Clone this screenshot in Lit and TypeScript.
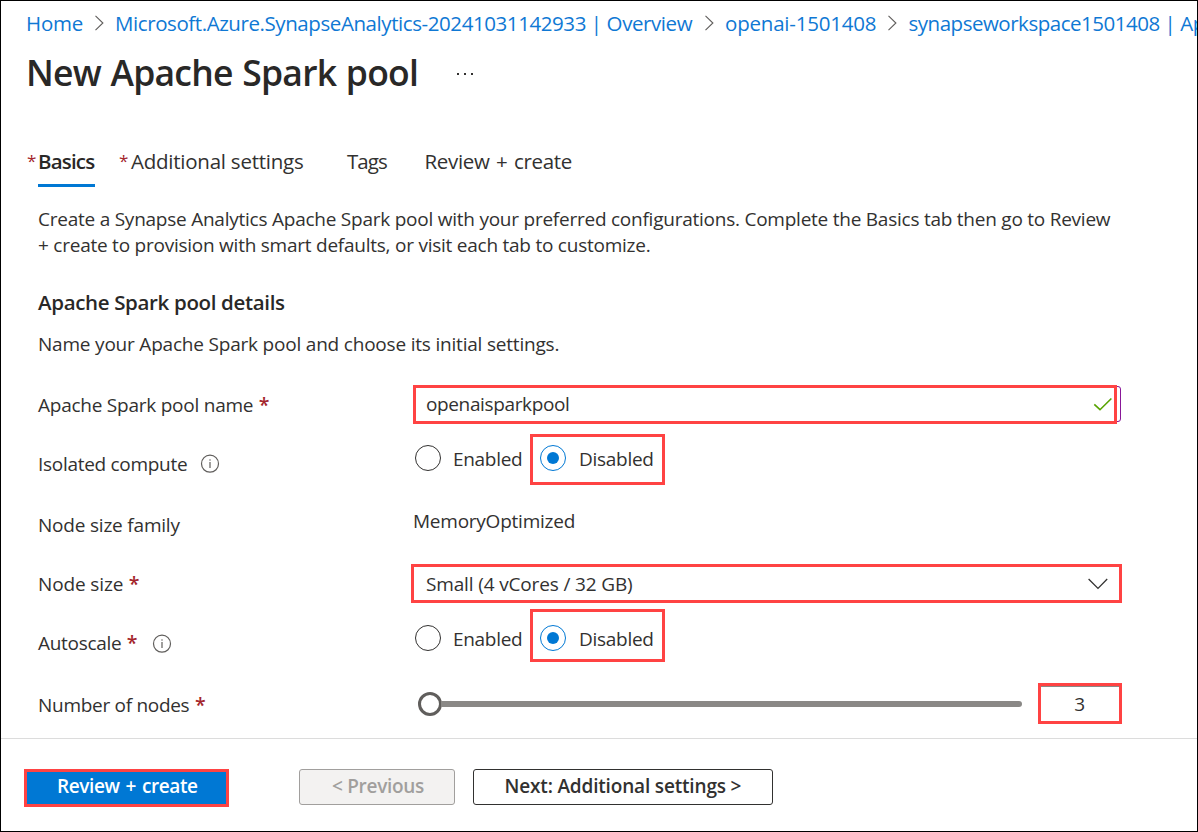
import { LitElement, html, css, nothing } from "lit";
import { customElement, property } from "lit/decorators.js";

const chevronRight = html`<svg class="sep" width="10" height="16" viewBox="0 0 10 16" fill="none" stroke="#605e5c" stroke-width="1.1"><path d="M.5.9 7.9 8 .5 15.1" /></svg>`;
const infoIcon = html`<svg class="info" width="20" height="20" viewBox="0 0 20 20" fill="none" stroke="#605e5c"><circle cx="10" cy="9.7" r="8.5" stroke-width="1.2" /><path d="M10 8V14" stroke-width="1.2" /><circle cx="10" cy="6" r=".75" fill="#605e5c" stroke="none" /></svg>`;
const checkIcon = html`<svg class="check" width="20" height="15" viewBox="0 0 20 15" fill="none" stroke="#57a300" stroke-width="1.6"><path d="M1.3 7.3 7 12.7 18.4 1.5" /></svg>`;
const chevronDown = html`<svg class="caret" width="22" height="13" viewBox="0 0 22 13" fill="none" stroke="#323130" stroke-width="1.3"><path d="M1.6 2 11 11.4 20.2 2" /></svg>`;

@customElement("radio-pair")
class RadioPair extends LitElement {
  @property({ type: Boolean }) tall = false;
  static styles = css`
    :host { display: block; }
    .pair { display: flex; align-items: flex-start; height: 51px; }
    .pair.tall { height: 53px; }
    .option { display: flex; box-sizing: border-box; height: 100%; line-height: 26px; padding-top: 11px; }
    .tall .option { padding-top: 16px; }
    .off { width: 119px; padding-left: 4px; }
    .on { width: 135px; border: 3px solid #ff4343; padding: 8px 0 0 7px; }
    .tall .on { padding-top: 13px; }
    .ring { box-sizing: border-box; width: 26px; height: 26px; border: 1.3px solid #323130; border-radius: 50%; flex: none; display: grid; place-items: center; }
    .on .ring { border-color: #0078d4; }
    .on .ring::after { content: ""; width: 12px; height: 12px; border-radius: 50%; background: #0078d4; }
    .text { padding: 1px 0 0 12px; letter-spacing: -0.3px; }
    .on .text { padding-left: 13px; letter-spacing: -0.28px; }
  `;
  render() {
    return html`<div class="pair ${this.tall ? "tall" : ""}">
      <label class="option off"><span class="ring"></span><span class="text">Enabled</span></label>
      <label class="option on"><span class="ring"></span><span class="text">Disabled</span></label>
    </div>`;
  }
}

@customElement("app-root")
class AppRoot extends LitElement {
  static styles = css`
    :host { display: block; font: 19px/26px "Open Sans", "Noto Sans", sans-serif; color: #323130; letter-spacing: -0.24px; }
    .page { box-sizing: border-box; width: 1198px; height: 832px; border: 1px solid #000; background: #fff; overflow: hidden; display: flex; flex-direction: column; white-space: nowrap; }
    .crumbs { display: flex; align-items: center; padding: 8px 0 0 25px; height: 28px; overflow: hidden; font-size: 20.5px; line-height: 28px; color: #0f78d4; }
    .crumbs span { flex: none; }
    .sep { flex: none; margin-right: 10.5px; }
    .c1 { width: 68.5px; letter-spacing: -0.2px; }
    .c2 { width: 589.5px; letter-spacing: -0.42px; }
    .c3 { width: 163px; letter-spacing: -0.2px; }
    .c4 { letter-spacing: -0.48px; }
    .head { display: flex; align-items: center; margin-top: 11px; height: 48px; padding-left: 25px; }
    h1 { margin: 0; font-size: 35.5px; line-height: 48px; font-weight: 600; letter-spacing: -0.75px; word-spacing: 1px; width: 431px; color: #292827; }
    .dots { display: flex; gap: 5px; margin-top: 4px; }
    .dots i { width: 2px; height: 2px; background: #323130; }
    .tabs { display: flex; margin-top: 51px; padding-left: 26px; height: 40px; font-size: 20.5px; line-height: 28px; }
    .star { color: #a4262c; }
    .tabs .star { width: 11px; font-size: 17px; line-height: 27px; flex: none; letter-spacing: 0; }
    .tab { box-sizing: border-box; height: 40px; }
    .basics { width: 57px; border-bottom: 3px solid #0078d4; font-weight: 600; letter-spacing: -0.83px; margin-right: 24px; color: #292827; }
    .additional { width: 216px; letter-spacing: -0.24px; padding-left: 1px; box-sizing: border-box; }
    .tags { width: 78.5px; letter-spacing: -0.95px; padding-left: 1px; }
    .review { letter-spacing: -0.32px; word-spacing: 1.5px; }
    .body { padding-left: 37px; }
    p { margin: 0; }
    .intro { margin-top: 19px; }
    h2 { margin: 30px 0 0; font-size: 20.5px; line-height: 28px; font-weight: 600; letter-spacing: -0.34px; color: #292827; }
    .sub { margin-top: 15px; letter-spacing: -0.2px; }
    .row { display: flex; align-items: flex-start; }
    .label { width: 373px; flex: none; display: flex; align-items: center; }
    .label .star { font-weight: 600; font-size: 19.5px; margin-left: 5.5px; letter-spacing: 0; }
    .info { margin-left: 13px; }
    .name { margin-top: 28px; height: 39px; }
    .name .label { padding-top: 7px; }
    .isolated { margin-top: 10px; }
    .isolated .label { padding-top: 17px; letter-spacing: -0.29px; }
    .family { margin-top: 23px; height: 26px; }
    .family .label { padding-top: 4px; letter-spacing: -0.2px; }
    .size { margin-top: 30px; }
    .size .label { padding-top: 7px; letter-spacing: -0.12px; }
    .autoscale { margin-top: 6px; }
    .autoscale .label { padding-top: 21px; letter-spacing: -0.3px; }
    .autoscale .info { margin-left: 14px; margin-top: 1px; }
    .count { margin-top: 21px; height: 41px; }
    .count .label { padding-top: 9px; letter-spacing: -0.29px; }
    .input { position: relative; box-sizing: border-box; margin: 1px 0 0 2px; width: 708px; height: 36px; border: 1px solid #881798; border-radius: 3px; display: flex; align-items: center; justify-content: space-between; padding: 0 7px 0 12px; letter-spacing: -0.37px; }
    .input::after { content: ""; position: absolute; box-sizing: border-box; left: -1px; top: -2px; width: 704px; height: 39px; border: 3px solid #ff4343; }
    .check { margin-top: 1px; }
    .select { box-sizing: border-box; width: 711px; height: 39px; border: 3px solid #ff4343; display: flex; align-items: center; justify-content: space-between; padding: 0 10px 0 12px; letter-spacing: -0.15px; }
    .memory { padding-left: 2px; letter-spacing: -0.24px; }
    .slider { display: flex; align-items: center; height: 41px; margin-left: 6px; width: 605px; }
    .thumb { box-sizing: border-box; width: 24px; height: 24px; border: 3px solid #605e5c; border-radius: 50%; flex: none; margin: 1px 0 0 0.5px; }
    .track { flex: 1; height: 6px; background: #8a8886; border-radius: 0 3px 3px 0; margin: 1px 0 0 -1px; }
    .number { box-sizing: border-box; width: 84px; height: 41px; margin-left: 16px; border: 3px solid #ff4343; box-shadow: inset 0 1px #8a8886; text-align: center; line-height: 37px; padding-right: 1px; }
    .footer { margin-top: 14px; border-top: 1px solid #dcdcdc; display: flex; align-items: flex-start; padding: 30px 0 0 23px; font-weight: 600; }
    .btn { box-sizing: border-box; height: 36px; border: 1px solid #323130; border-radius: 3px; padding-top: 3px; }
    .primary { width: 205px; height: 38px; border: 3px solid #ff4343; border-radius: 0; background: #0078d4; color: #fff; padding: 1px 0 0 30px; margin-right: 70px; letter-spacing: -0.38px; word-spacing: 1.3px; }
    .prev { width: 156px; background: #f3f2f1; border-color: #a19f9d; color: #a19f9d; padding-left: 32px; margin-right: 18px; letter-spacing: -0.3px; }
    .next { width: 300px; padding-left: 30.5px; letter-spacing: -0.17px; }
  `;

  row(kind: string, text: string, required: boolean, info: boolean, field: unknown) {
    return html`<div class="row ${kind}">
      <div class="label">${text}${required ? html`<span class="star">*</span>` : nothing}${info ? infoIcon : nothing}</div>
      ${field}
    </div>`;
  }

  render() {
    return html`<div class="page">
      <nav class="crumbs"><span class="c1">Home</span>${chevronRight}<span class="c2">Microsoft.Azure.SynapseAnalytics-20241031142933 | Overview</span>${chevronRight}<span class="c3">openai-1501408</span>${chevronRight}<span class="c4">synapseworkspace1501408 | Apache Spark pools</span></nav>
      <header class="head"><h1>New Apache Spark pool</h1><div class="dots"><i></i><i></i><i></i></div></header>
      <div class="tabs">
        <span class="star">*</span><div class="tab basics">Basics</div>
        <span class="star">*</span><div class="tab additional">Additional settings</div>
        <div class="tab tags">Tags</div>
        <div class="tab review">Review + create</div>
      </div>
      <main class="body">
        <p class="intro">Create a Synapse Analytics Apache Spark pool with your preferred configurations. Complete the Basics tab then go to Review<br />+ create to provision with smart defaults, or visit each tab to customize.</p>
        <h2>Apache Spark pool details</h2>
        <p class="sub">Name your Apache Spark pool and choose its initial settings.</p>
        ${this.row("name", "Apache Spark pool name", true, false, html`<div class="input">openaisparkpool${checkIcon}</div>`)}
        ${this.row("isolated", "Isolated compute", false, true, html`<radio-pair></radio-pair>`)}
        ${this.row("family", "Node size family", false, false, html`<div class="memory">MemoryOptimized</div>`)}
        ${this.row("size", "Node size", true, false, html`<div class="select">Small (4 vCores / 32 GB)${chevronDown}</div>`)}
        ${this.row("autoscale", "Autoscale", true, true, html`<radio-pair tall></radio-pair>`)}
        ${this.row("count", "Number of nodes", true, false, html`<div class="slider"><span class="thumb"></span><span class="track"></span></div><div class="number">3</div>`)}
      </main>
      <footer class="footer">
        <div class="btn primary">Review + create</div>
        <div class="btn prev">&lt; Previous</div>
        <div class="btn next">Next: Additional settings &gt;</div>
      </footer>
    </div>`;
  }
}
